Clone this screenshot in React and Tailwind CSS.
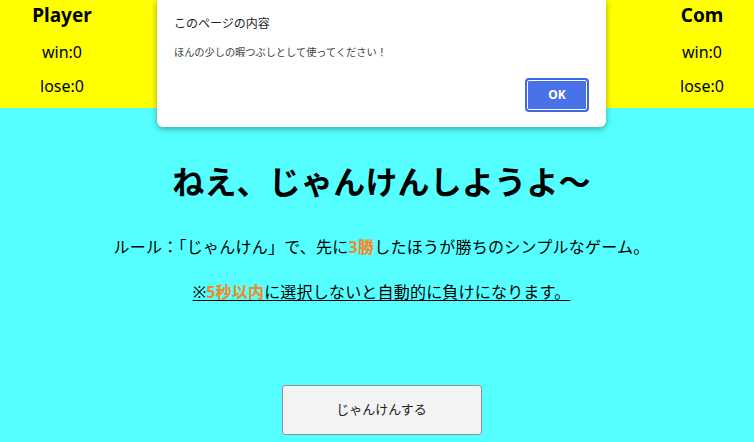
import React from 'react';

const font = { fontFamily: '"Noto Sans", "Noto Sans CJK JP", sans-serif' };

function ScoreBox({ name, width }) {
  return (
    <div className={`${width} flex flex-col items-center text-black`}>
      <p className="text-[19px] font-bold leading-[30px]">{name}</p>
      <p className="mt-[5px] text-[16px] leading-[34px]">win:0</p>
      <p className="text-[16px] leading-[34px]">lose:0</p>
    </div>
  );
}

export default function App() {
  return (
    <div className="relative min-h-screen bg-[#55ffff]" style={font}>
      {/* Scoreboard */}
      <div className="flex justify-between h-[108px] bg-[#ffff00]">
        <ScoreBox name="Player" width="w-[124px]" />
        <ScoreBox name="Com" width="w-[104px]" />
      </div>

      {/* Main */}
      <div className="flex flex-col items-center pl-[9px] text-black">
        <h1 className="mt-[54px] text-[32px] font-bold leading-[40px] tracking-[0.2px]">ねえ、じゃんけんしようよ〜</h1>
        <p className="mt-[33px] text-[16px] leading-[24px] tracking-[0.25px]">
          ルール：「じゃんけん」で、先に<span className="font-bold text-[#f7861e]">3勝</span>したほうが勝ちのシンプルなゲーム。
        </p>
        <p className="mt-[21px] text-[16px] leading-[24px] tracking-[0.2px] underline underline-offset-2">
          ※<span className="font-bold text-[#f7861e]">5秒以内</span>に選択しないと自動的に負けになります。
        </p>
        <button className="mt-[81px] w-[200px] h-[50px] bg-[#f3f3f3] border border-[#8f8f8f] rounded-[3px] text-[13px] text-[#222]">
          じゃんけんする
        </button>
      </div>

      {/* Alert dialog */}
      <div className="absolute left-[157px] top-0 w-[449px] h-[127px] bg-white rounded-b-[6px] shadow-[0_2px_6px_rgba(0,0,0,0.35)]">
        <p className="absolute left-[17px] top-[15px] text-[12px] leading-[18px] text-[#202124]">このページの内容</p>
        <p className="absolute left-[17px] top-[44px] text-[10.2px] leading-[16px] text-[#3c4043]">ほんの少しの暇つぶしとして使ってください！</p>
        <button className="absolute left-[368px] top-[78px] w-[64px] h-[34px] rounded-[4px] bg-[#4a72e8] border-2 border-[#3b6ae3] ring-1 ring-inset ring-white text-white text-[12px] font-bold">
          OK
        </button>
      </div>
    </div>
  );
}
